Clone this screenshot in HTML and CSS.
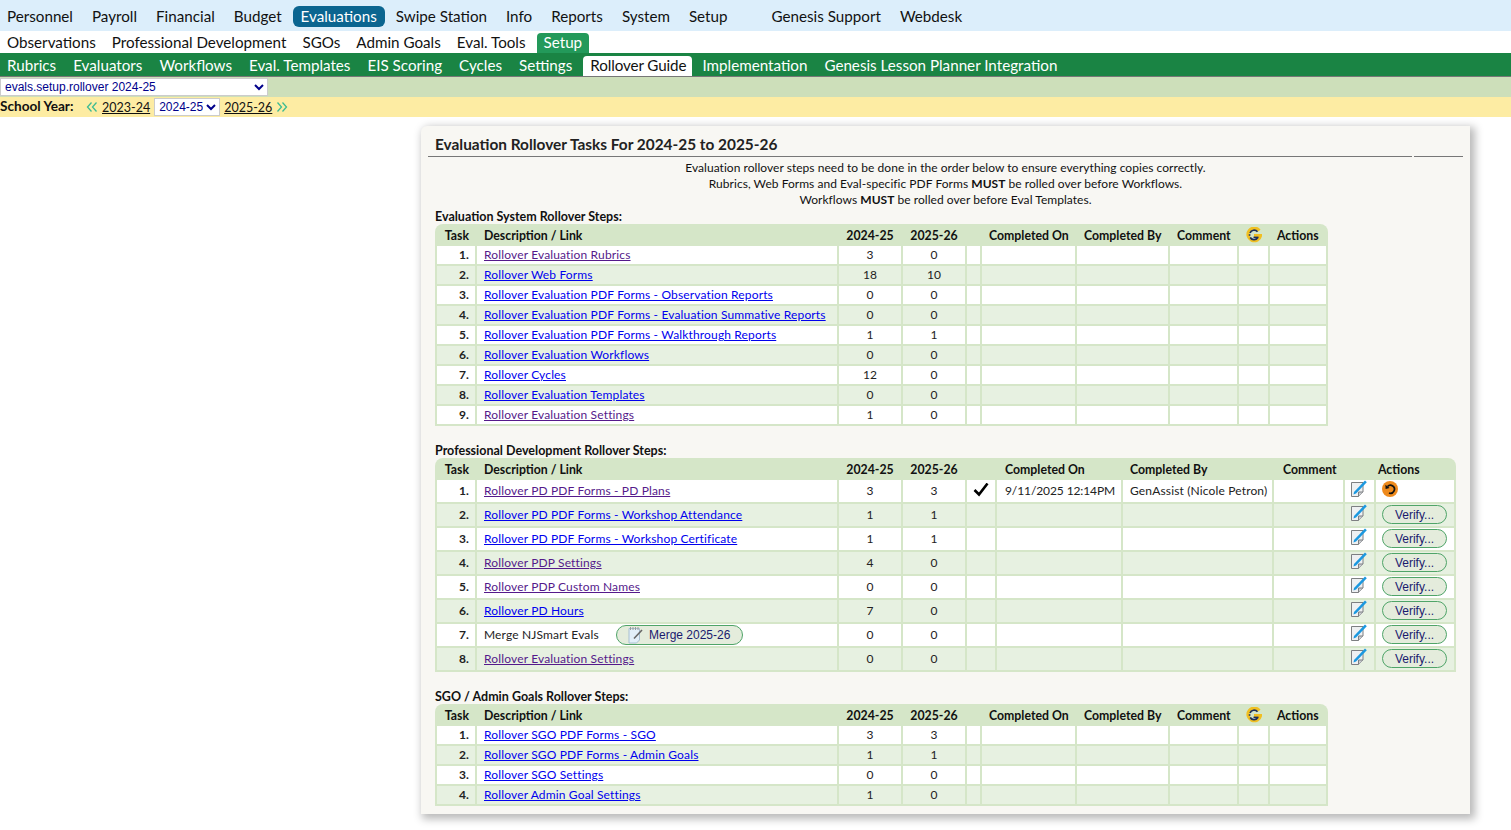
FILE: index.html
```html
<!DOCTYPE html>
<html lang="en">
<head>
<meta charset="utf-8">
<title>Evaluation Rollover Tasks</title>
<link rel="stylesheet" href="styles.css">
</head>
<body>
<svg class="defs" width="0" height="0" aria-hidden="true">
  <symbol id="note" viewBox="0 0 16 17">
    <path d="M.5 2.500h11.500v9.500l-4.500 4.500h-7z" fill="#eef0f2" stroke="#7d7f82"/>
    <path d="M7.500 16.500v-4.500h4.500" fill="#c9ccd0" stroke="#7d7f82"/>
    <path d="M3 12 14 .5l1.800 1.700L5 13.600l-2.500.8z" fill="#1b98e0"/>
  </symbol>
  <symbol id="g" viewBox="0 0 16 16">
    <path d="M13.300 3.600A6.300 6.300 0 1 0 14.500 8.500H8" fill="none" stroke="#f0bf22" stroke-width="3.200"/>
    <path d="M11.500 4.800A4.400 4.400 0 0 0 4 6M4.200 10.500a4.400 4.400 0 0 0 7.600 0M3.600 8.800v-1.500" fill="none" stroke="#1c2f5c" stroke-width="1.700"/>
    <path d="M7.500 10.300h5" stroke="#1c2f5c" stroke-width="1.400"/>
  </symbol>
</svg>

<nav class="nav-main">
  <a>Personnel</a><a>Payroll</a><a>Financial</a><a>Budget</a><a class="on">Evaluations</a><a>Swipe Station</a><a>Info</a><a>Reports</a><a>System</a><a>Setup</a>
  <a class="nav-gap">Genesis Support</a><a>Webdesk</a>
</nav>
<nav class="nav-sub">
  <a>Observations</a><a>Professional Development</a><a>SGOs</a><a>Admin Goals</a><a>Eval. Tools</a><a class="on">Setup</a>
</nav>
<nav class="nav-tabs">
  <a>Rubrics</a><a>Evaluators</a><a>Workflows</a><a>Eval. Templates</a><a>EIS Scoring</a><a>Cycles</a><a>Settings</a><a class="on">Rollover Guide</a><a>Implementation</a><a>Genesis Lesson Planner Integration</a>
</nav>
<div class="bar-sage">
  <select class="sel-screen"><option>evals.setup.rollover 2024-25</option></select>
</div>
<div class="bar-year">
  <b class="year-label">School Year:</b>
  <svg class="chev" viewBox="0 0 12 10"><path d="M5.500 .5 1.500 5l4 4.500M10.500 .5l-4 4.500 4 4.500" fill="none" stroke="#3dbb92" stroke-width="1.300"/></svg>
  <a class="year-link">2023-24</a>
  <select class="sel-year"><option>2024-25</option></select>
  <a class="year-link">2025-26</a>
  <svg class="chev" viewBox="0 0 12 10"><path d="M1.500 .5l4 4.500-4 4.500M6.500 .5l4 4.500-4 4.500" fill="none" stroke="#3dbb92" stroke-width="1.300"/></svg>
</div>

<main class="panel">
  <header class="title-row">
    <h1>Evaluation Rollover Tasks For 2024-25 to 2025-26</h1>
    <div class="title-end"></div>
  </header>
  <p class="intro">Evaluation rollover steps need to be done in the order below to ensure everything copies correctly.<br>
  Rubrics, Web Forms and Eval-specific PDF Forms <b>MUST</b> be rolled over before Workflows.<br>
  Workflows <b>MUST</b> be rolled over before Eval Templates.</p>

  <h2>Evaluation System Rollover Steps:</h2>
  <table class="grid narrow">
    <colgroup><col class="c-task"><col class="c-desc"><col class="c-yr"><col class="c-yr"><col class="c-chk"><col class="c-on"><col class="c-by"><col class="c-com"><col class="c-g"><col class="c-act"></colgroup>
    <thead><tr><th class="num">Task</th><th>Description / Link</th><th class="ctr">2024-25</th><th class="ctr">2025-26</th><th></th><th>Completed On</th><th>Completed By</th><th>Comment</th><th class="ctr"><svg class="g"><use href="#g"/></svg></th><th>Actions</th></tr></thead>
    <tbody>
      <tr><td class="num">1.</td><td><a class="seen">Rollover Evaluation Rubrics</a></td><td class="ctr">3</td><td class="ctr">0</td><td></td><td></td><td></td><td></td><td></td><td></td></tr>
      <tr><td class="num">2.</td><td><a>Rollover Web Forms</a></td><td class="ctr">18</td><td class="ctr">10</td><td></td><td></td><td></td><td></td><td></td><td></td></tr>
      <tr><td class="num">3.</td><td><a>Rollover Evaluation PDF Forms - Observation Reports</a></td><td class="ctr">0</td><td class="ctr">0</td><td></td><td></td><td></td><td></td><td></td><td></td></tr>
      <tr><td class="num">4.</td><td><a>Rollover Evaluation PDF Forms - Evaluation Summative Reports</a></td><td class="ctr">0</td><td class="ctr">0</td><td></td><td></td><td></td><td></td><td></td><td></td></tr>
      <tr><td class="num">5.</td><td><a>Rollover Evaluation PDF Forms - Walkthrough Reports</a></td><td class="ctr">1</td><td class="ctr">1</td><td></td><td></td><td></td><td></td><td></td><td></td></tr>
      <tr><td class="num">6.</td><td><a>Rollover Evaluation Workflows</a></td><td class="ctr">0</td><td class="ctr">0</td><td></td><td></td><td></td><td></td><td></td><td></td></tr>
      <tr><td class="num">7.</td><td><a>Rollover Cycles</a></td><td class="ctr">12</td><td class="ctr">0</td><td></td><td></td><td></td><td></td><td></td><td></td></tr>
      <tr><td class="num">8.</td><td><a>Rollover Evaluation Templates</a></td><td class="ctr">0</td><td class="ctr">0</td><td></td><td></td><td></td><td></td><td></td><td></td></tr>
      <tr><td class="num">9.</td><td><a class="seen">Rollover Evaluation Settings</a></td><td class="ctr">1</td><td class="ctr">0</td><td></td><td></td><td></td><td></td><td></td><td></td></tr>
    </tbody>
  </table>

  <h2 class="spaced">Professional Development Rollover Steps:</h2>
  <table class="grid wide">
    <colgroup><col class="c-task"><col class="c-desc"><col class="c-yr"><col class="c-yr"><col class="w-chk"><col class="w-on"><col class="w-by"><col class="w-com"><col class="w-edit"><col class="w-act"></colgroup>
    <thead><tr><th class="num">Task</th><th>Description / Link</th><th class="ctr">2024-25</th><th class="ctr">2025-26</th><th></th><th class="on-head">Completed On</th><th>Completed By</th><th class="com-head">Comment</th><th></th><th class="tight">Actions</th></tr></thead>
    <tbody>
      <tr><td class="num">1.</td><td><a class="seen">Rollover PD PDF Forms - PD Plans</a></td><td class="ctr">3</td><td class="ctr">3</td><td class="ctr"><svg class="check" viewBox="0 0 16 14"><path d="M1.500 7 6 11.500 14.500 .5" fill="none" stroke="#000" stroke-width="2.600"/></svg></td><td class="on-head date">9/11/2025 12:14PM</td><td>GenAssist (Nicole Petron)</td><td></td><td class="top"><svg class="note"><use href="#note"/></svg></td><td class="top"><svg class="undo" viewBox="0 0 16 16"><circle cx="8" cy="8" r="8" fill="#ee8a1d"/><path d="M5.500 5.500a4 4 0 1 1 1.500 6.500" fill="none" stroke="#111" stroke-width="1.700"/><path d="M3.400 3.800 3.600 8l4-.9z" fill="#111"/></svg></td></tr>
      <tr><td class="num">2.</td><td><a>Rollover PD PDF Forms - Workshop Attendance</a></td><td class="ctr">1</td><td class="ctr">1</td><td></td><td></td><td></td><td></td><td class="top"><svg class="note"><use href="#note"/></svg></td><td class="top"><button class="btn">Verify...</button></td></tr>
      <tr><td class="num">3.</td><td><a>Rollover PD PDF Forms - Workshop Certificate</a></td><td class="ctr">1</td><td class="ctr">1</td><td></td><td></td><td></td><td></td><td class="top"><svg class="note"><use href="#note"/></svg></td><td class="top"><button class="btn">Verify...</button></td></tr>
      <tr><td class="num">4.</td><td><a class="seen">Rollover PDP Settings</a></td><td class="ctr">4</td><td class="ctr">0</td><td></td><td></td><td></td><td></td><td class="top"><svg class="note"><use href="#note"/></svg></td><td class="top"><button class="btn">Verify...</button></td></tr>
      <tr><td class="num">5.</td><td><a class="seen">Rollover PDP Custom Names</a></td><td class="ctr">0</td><td class="ctr">0</td><td></td><td></td><td></td><td></td><td class="top"><svg class="note"><use href="#note"/></svg></td><td class="top"><button class="btn">Verify...</button></td></tr>
      <tr><td class="num">6.</td><td><a>Rollover PD Hours</a></td><td class="ctr">7</td><td class="ctr">0</td><td></td><td></td><td></td><td></td><td class="top"><svg class="note"><use href="#note"/></svg></td><td class="top"><button class="btn">Verify...</button></td></tr>
      <tr><td class="num">7.</td><td><div class="merge-cell"><span>Merge NJSmart Evals</span><button class="btn btn-merge"><svg class="pad" viewBox="0 0 15 18"><path d="M1 2.500h10.500v11.500l-3 3H1z" fill="#e2eff9" stroke="#a9c0d2"/><path d="M2.500 1v3M5 1v3M7.500 1v3M10 1v3" stroke="#9a9a9a"/><path d="M6 12.500 14 4" stroke="#666" stroke-width="1.600"/></svg>Merge 2025-26</button></div></td><td class="ctr">0</td><td class="ctr">0</td><td></td><td></td><td></td><td></td><td class="top"><svg class="note"><use href="#note"/></svg></td><td class="top"><button class="btn">Verify...</button></td></tr>
      <tr><td class="num">8.</td><td><a class="seen">Rollover Evaluation Settings</a></td><td class="ctr">0</td><td class="ctr">0</td><td></td><td></td><td></td><td></td><td class="top"><svg class="note"><use href="#note"/></svg></td><td class="top"><button class="btn">Verify...</button></td></tr>
    </tbody>
  </table>

  <h2 class="spaced">SGO / Admin Goals Rollover Steps:</h2>
  <table class="grid narrow">
    <colgroup><col class="c-task"><col class="c-desc"><col class="c-yr"><col class="c-yr"><col class="c-chk"><col class="c-on"><col class="c-by"><col class="c-com"><col class="c-g"><col class="c-act"></colgroup>
    <thead><tr><th class="num">Task</th><th>Description / Link</th><th class="ctr">2024-25</th><th class="ctr">2025-26</th><th></th><th>Completed On</th><th>Completed By</th><th>Comment</th><th class="ctr"><svg class="g"><use href="#g"/></svg></th><th>Actions</th></tr></thead>
    <tbody>
      <tr><td class="num">1.</td><td><a>Rollover SGO PDF Forms - SGO</a></td><td class="ctr">3</td><td class="ctr">3</td><td></td><td></td><td></td><td></td><td></td><td></td></tr>
      <tr><td class="num">2.</td><td><a>Rollover SGO PDF Forms - Admin Goals</a></td><td class="ctr">1</td><td class="ctr">1</td><td></td><td></td><td></td><td></td><td></td><td></td></tr>
      <tr><td class="num">3.</td><td><a>Rollover SGO Settings</a></td><td class="ctr">0</td><td class="ctr">0</td><td></td><td></td><td></td><td></td><td></td><td></td></tr>
      <tr><td class="num">4.</td><td><a>Rollover Admin Goal Settings</a></td><td class="ctr">1</td><td class="ctr">0</td><td></td><td></td><td></td><td></td><td></td><td></td></tr>
    </tbody>
  </table>
</main>
</body>
</html>
```
FILE: styles.css
```css
* { box-sizing: border-box; }
html, body { margin: 0; padding: 0; background: #fff; }
body { font-family: Lato, "Noto Sans", sans-serif; color: #111; min-height: 830px; }
.defs { position: absolute; }

.nav-main, .nav-sub, .nav-tabs { display: flex; align-items: center; white-space: nowrap; font-size: 15.2px; }
.nav-main { height: 31px; background: #dceefb; gap: 3px; padding-top: 2px; }
.nav-main a { height: 21px; line-height: 21px; padding: 0 8px; border-radius: 6px; }
.nav-main a:first-child { margin-left: -1px; }
.nav-main a.on { background: #0b6590; color: #fff; }
.nav-main .nav-gap { margin-left: 25px; }
.nav-sub { height: 22px; background: #fff; align-items: flex-end; gap: 2px; }
.nav-sub a { height: 20px; line-height: 18px; padding: 0 7px; border-radius: 4px 4px 0 0; }
.nav-sub a.on { background: #23995a; color: #fff; margin-left: 2px; }
.nav-tabs { height: 24px; background: #1a8444; border-bottom: 1px solid #777; align-items: flex-end; color: #fff; gap: 3px; }
.nav-tabs a { height: 20px; line-height: 18px; padding: 0 7px; border-radius: 4px 4px 0 0; }
.nav-tabs a.on { background: #fff; color: #111; letter-spacing: -.1px; padding: 0 6px 0 7px; margin-left: 1px; }

.bar-sage { height: 20px; background: #cddfba; padding-top: 1px; }
.sel-screen { display: block; width: 268px; height: 18px; font: 12px "Liberation Sans", sans-serif; color: #00008b; background: #fff; border: 1px solid #ccc; padding: 0; }
.bar-year { height: 20px; background: #fdeca3; display: flex; align-items: center; font-size: 12.5px; }
.year-label { width: 86px; font-size: 13.6px; margin-top: -2px; }
.chev { width: 12px; height: 10px; margin-top: -1px; }
.year-link { color: #111; text-decoration: underline; margin: 0 4px; }
.sel-year { width: 66px; height: 18px; font: 12px "Liberation Sans", sans-serif; color: #00008b; background: #fff; border: 1px solid #ccc; padding: 0; }

.panel { width: 1049px; height: 688px; margin: 9px 0 0 421px; background: #f8f7f3; box-shadow: 3px 3px 9px 2px rgba(0,0,0,.28); border-radius: 6px 0 0 0; padding: 0 14px; font-size: 12px; }
.title-row { display: flex; gap: 2px; height: 31px; margin: 0 -7px; }
.title-row h1 { flex: 1; margin: 0; padding: 8px 0 0 7px; font-size: 15.4px; font-weight: 700; line-height: 20px; border-bottom: 1px solid #777; color: #222; }
.title-end { width: 49px; border-bottom: 1px solid #777; }
.intro { margin: 3px 0 0; line-height: 16px; text-align: center; height: 48px; letter-spacing: .04px; }
h2 { margin: 0; font-size: 12.5px; line-height: 16px; height: 16px; font-weight: 700; padding-top: 1px; }
h2.spaced { margin-top: 16px; }

.grid { table-layout: fixed; border-collapse: separate; border-spacing: 2px; background: #d5e6c8; border-radius: 8px 8px 0 0; }
.narrow { width: 893px; }
.wide { width: 1021px; }
.c-task { width: 38px; } .c-desc { width: 360px; } .c-yr { width: 62px; } .c-chk { width: 13px; }
.c-on { width: 93px; } .c-by { width: 91px; } .c-com { width: 67px; } .c-g { width: 29px; } .c-act { width: 56px; }
.w-chk { width: 28px; } .w-on { width: 124px; } .w-by { width: 149px; } .w-com { width: 69px; } .w-edit { width: 29px; } .w-act { width: 78px; }
.grid th, .grid td { text-align: left; white-space: nowrap; overflow: hidden; line-height: 16px; }
.grid th { height: 18px; padding: 1px 7px 0; font-weight: 700; color: #111; font-size: 12.3px; }
.grid td { height: 18px; padding: 0 7px; color: #222; letter-spacing: .15px; }
.wide td { height: 22px; }
.grid tbody tr:nth-child(odd) td { background: #fff; }
.grid tbody tr:nth-child(even) td { background: #e7f1e1; }
.grid .num { text-align: right; padding-left: 0; padding-right: 6px; font-weight: 700; }
.grid .ctr { text-align: center; padding-left: 0; padding-right: 0; }
.grid th.ctr svg { margin-top: -1px; }
.grid .tight { padding-left: 2px; padding-right: 2px; }
.grid .on-head { padding-left: 8px; }
.grid .com-head { padding-left: 9px; }
.grid .date { letter-spacing: -.1px; }
.grid td.top { vertical-align: top; padding: 1px 0 0 6px; }
.grid a { color: #0000ee; text-decoration: underline; }
.grid a.seen { color: #551a8b; }
.g { width: 16px; height: 16px; display: block; margin: 0 auto; }
.note { width: 16px; height: 17px; display: block; margin-top: -1px; }
.check { width: 16px; height: 14px; display: block; margin: -3px auto 0; }
.undo { width: 16px; height: 16px; display: block; }
.btn { display: block; height: 19px; width: 65px; padding: 0; border: 1px solid #4fa468; border-radius: 10px; background: #e4ecdc; font: 12px/16px "Liberation Sans", sans-serif; color: #1a1a6e; }
.merge-cell { display: flex; align-items: center; }
.merge-cell span { width: 132px; }
.btn-merge { width: 127px; height: 20px; display: flex; align-items: center; gap: 6px; padding-left: 11px; }
.pad { width: 15px; height: 18px; }
```
